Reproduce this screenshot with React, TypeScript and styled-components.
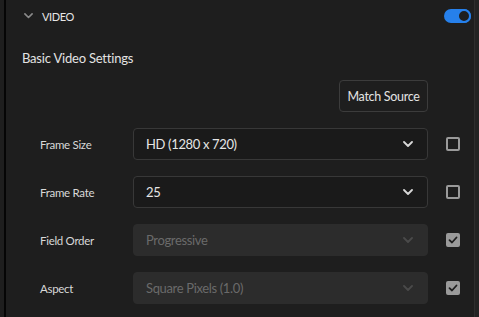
import React from "react";
import styled, { createGlobalStyle } from "styled-components";

const Global = createGlobalStyle`
  html, body { margin: 0; padding: 0; background: #1e1e1e; }
  body { font-family: Lato, "Open Sans", sans-serif; -webkit-font-smoothing: antialiased; }
`;

const Frame = styled.div`
  display: flex;
  width: 479px;
  height: 317px;
  background: #1e1e1e;
  overflow: hidden;
`;

const Gutter = styled.div`
  width: 4px;
  flex: none;
  background: #1e1e1e;
`;

const Divider = styled.div<{ $c: string; $w: number }>`
  width: ${(p) => p.$w}px;
  flex: none;
  background: ${(p) => p.$c};
`;

const Main = styled.div`
  width: 468px;
  flex: none;
  display: flex;
  flex-direction: column;
  background: #1e1e1e;
`;

const RightEdge = styled.div`
  width: 4px;
  flex: none;
  background: #232323;
`;

const Header = styled.div`
  height: 32px;
  display: flex;
  align-items: center;
  padding: 0 3px 0 18px;
`;

const HeaderTitle = styled.span`
  color: #e6e6e6;
  font-size: 11px;
  letter-spacing: -0.4px;
  margin-left: 9px;
  flex: 1;
`;

const Toggle = styled.div`
  width: 27px;
  height: 14px;
  border-radius: 7px;
  background: #2680eb;
  position: relative;
`;

const Knob = styled.div`
  position: absolute;
  right: 0;
  top: 0;
  width: 10px;
  height: 10px;
  border-radius: 50%;
  background: #1e1e1e;
  border: 2px solid #2680eb;
`;

const SectionTitle = styled.div`
  color: #e3e3e3;
  font-size: 13px;
  font-weight: 400;
  padding: 18px 0 0 16px;
  height: 24px;
  letter-spacing: -0.2px;
`;

const ButtonRow = styled.div`
  display: flex;
  justify-content: flex-end;
  padding: 6px 46px 0 0;
`;

const Button = styled.button`
  height: 32px;
  width: 89px;
  padding: 0;
  background: #1e1e1e;
  border: 1px solid #3c3c3c;
  border-radius: 4px;
  color: #e3e3e3;
  font-family: Lato, "Open Sans", sans-serif;
  font-size: 12.5px;
  letter-spacing: -0.3px;
`;

const Rows = styled.div`
  display: grid;
  grid-template-columns: 93px 295px 32px;
  row-gap: 16px;
  align-items: center;
  padding: 16px 0 0 34px;
`;

const Label = styled.div`
  color: #d8d8d8;
  font-size: 11.5px;
  letter-spacing: -0.3px;
`;

const Select = styled.div<{ $disabled?: boolean }>`
  height: 32px;
  box-sizing: border-box;
  display: flex;
  align-items: center;
  justify-content: space-between;
  padding: 0 14px 0 12px;
  border-radius: 4px;
  border: 1px solid ${(p) => (p.$disabled ? "#2c2c2c" : "#383838")};
  background: ${(p) => (p.$disabled ? "#2c2c2c" : "#1a1a1a")};
  color: ${(p) => (p.$disabled ? "#6a6a6a" : "#e6e6e6")};
  font-size: 13px;
  letter-spacing: -0.35px;
`;

const Check = styled.div<{ $checked?: boolean }>`
  width: 14px;
  height: 14px;
  margin-left: 18px;
  box-sizing: border-box;
  border-radius: 2px;
  border: 2px solid #9a9a9a;
  background: ${(p) => (p.$checked ? "#9a9a9a" : "transparent")};
  display: flex;
  align-items: center;
  justify-content: center;
`;

const Chevron = ({ color, size = 10 }: { color: string; size?: number }) => (
  <svg width={size} height={size * 0.6} viewBox="0 0 10 6">
    <path d="M1 1 L5 5 L9 1" fill="none" stroke={color} strokeWidth="1.8" strokeLinecap="round" strokeLinejoin="round" />
  </svg>
);

const Tick = () => (
  <svg width="10" height="8" viewBox="0 0 10 8">
    <path d="M1.5 4.2 L4 6.5 L8.5 1.5" fill="none" stroke="#1e1e1e" strokeWidth="1.8" strokeLinecap="round" strokeLinejoin="round" />
  </svg>
);

const rows = [
  { label: "Frame Size", value: "HD (1280 x 720)", disabled: false, checked: false },
  { label: "Frame Rate", value: "25", disabled: false, checked: false },
  { label: "Field Order", value: "Progressive", disabled: true, checked: true },
  { label: "Aspect", value: "Square Pixels (1.0)", disabled: true, checked: true },
];

export default function App() {
  return (
    <>
      <Global />
      <Frame>
        <Gutter />
        <Divider $c="#050505" $w={2} />
        <Main>
          <Header>
            <Chevron color="#8a8a8a" size={9} />
            <HeaderTitle>VIDEO</HeaderTitle>
            <Toggle>
              <Knob />
            </Toggle>
          </Header>
          <SectionTitle>Basic Video Settings</SectionTitle>
          <ButtonRow>
            <Button>Match Source</Button>
          </ButtonRow>
          <Rows>
            {rows.map((r) => (
              <React.Fragment key={r.label}>
                <Label>{r.label}</Label>
                <Select $disabled={r.disabled}>
                  <span>{r.value}</span>
                  <Chevron color={r.disabled ? "#4a4a4a" : "#d8d8d8"} />
                </Select>
                <Check $checked={r.checked}>{r.checked && <Tick />}</Check>
              </React.Fragment>
            ))}
          </Rows>
        </Main>
        <Divider $c="#2e2e2e" $w={1} />
        <RightEdge />
      </Frame>
    </>
  );
}
